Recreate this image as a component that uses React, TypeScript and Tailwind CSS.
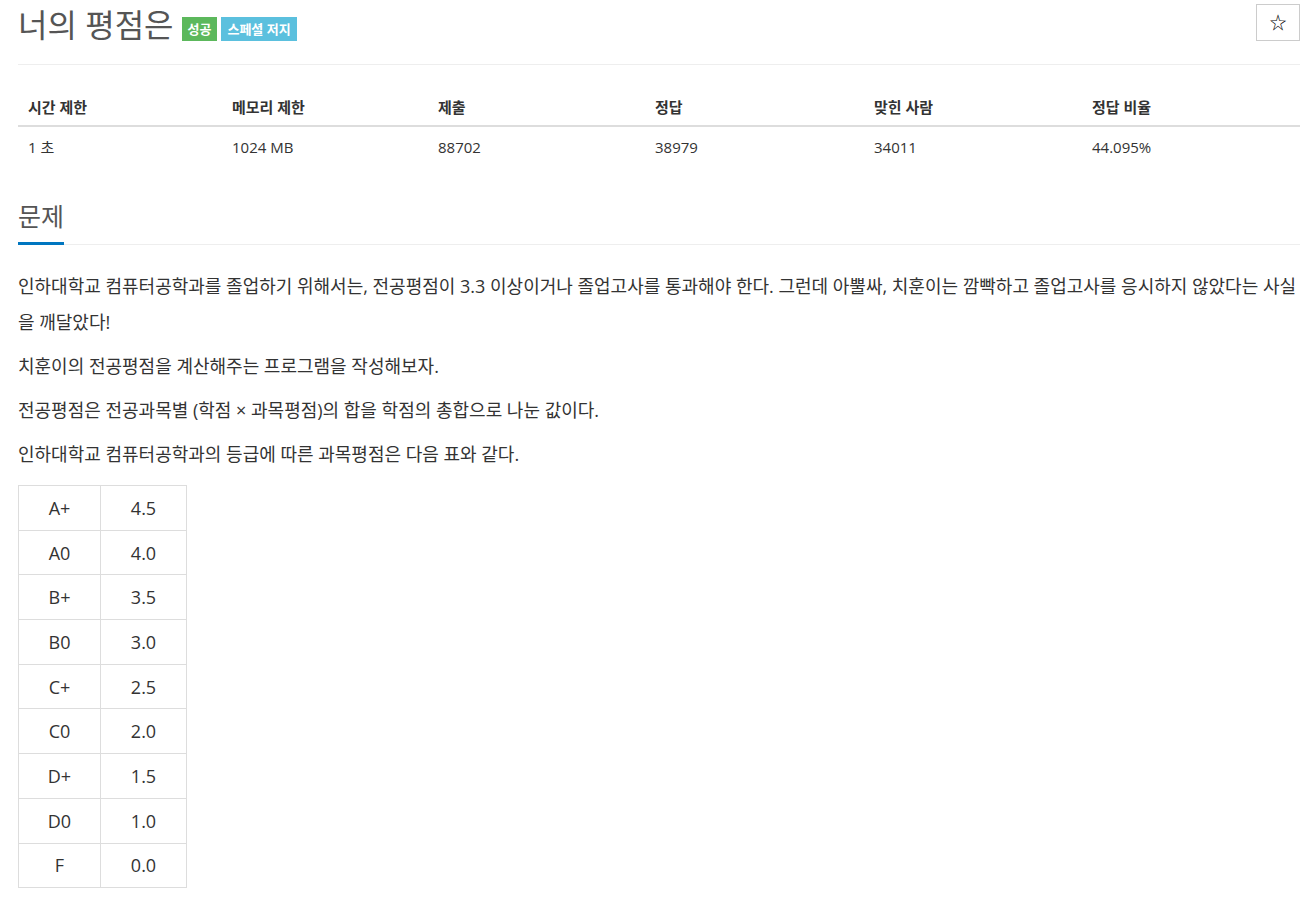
const stats = [
  { label: '시간 제한', value: '1 초', w: 'w-[204px]' },
  { label: '메모리 제한', value: '1024 MB', w: 'w-[206px]' },
  { label: '제출', value: '88702', w: 'w-[217px]' },
  { label: '정답', value: '38979', w: 'w-[219px]' },
  { label: '맞힌 사람', value: '34011', w: 'w-[218px]' },
  { label: '정답 비율', value: '44.095%', w: '' },
]

const grades = [
  ['A+', '4.5'],
  ['A0', '4.0'],
  ['B+', '3.5'],
  ['B0', '3.0'],
  ['C+', '2.5'],
  ['C0', '2.0'],
  ['D+', '1.5'],
  ['D0', '1.0'],
  ['F', '0.0'],
]

export default function App() {
  return (
    <div
      className="min-h-screen bg-white pl-[18px] pr-[11px] text-[#333]"
      style={{ fontFamily: '"Open Sans", "Noto Sans CJK KR", sans-serif' }}
    >
      {/* title */}
      <div className="flex items-start justify-between border-b border-[#eee] pb-[17px]">
        <div className="flex items-end pt-[3px]">
          <h1 className="text-[32px] leading-[44px] text-[#555]">너의 평점은</h1>
          <span className="mb-[6px] ml-[8px] bg-[#5cb85c] px-[6px] py-[3px] text-[13px] font-bold leading-[18px] text-white">
            성공
          </span>
          <span className="mb-[6px] ml-[4px] bg-[#5bc0de] px-[6px] py-[3px] text-[13px] font-bold leading-[18px] text-white">
            스페셜 저지
          </span>
        </div>
        <button className="mt-[4px] flex h-[37px] w-[44px] items-center justify-center border border-[#ccc] bg-white text-[17px] text-black">
          ☆
        </button>
      </div>

      {/* stats */}
      <table className="mt-[24px] w-full border-collapse text-[15px]">
        <thead>
          <tr className="border-b-2 border-[#ddd]">
            {stats.map((s) => (
              <th key={s.label} className={`${s.w} h-[37px] px-[10px] text-left font-bold`}>
                {s.label}
              </th>
            ))}
          </tr>
        </thead>
        <tbody>
          <tr>
            {stats.map((s) => (
              <td key={s.label} className="h-[42px] px-[10px] text-left">
                {s.value}
              </td>
            ))}
          </tr>
        </tbody>
      </table>

      {/* problem section */}
      <div className="mt-[30px] flex border-b border-[#eee]">
        <h2 className="-mb-px border-b-[3px] border-[#0076c0] pb-[8px] text-[25px] leading-[36px] text-[#555]">
          문제
        </h2>
      </div>

      <div className="mt-[23px] text-[18px] leading-[36px]">
        <p className="mb-[8px]">
          인하대학교 컴퓨터공학과를 졸업하기 위해서는, 전공평점이 3.3 이상이거나 졸업고사를 통과해야 한다. 그런데 아뿔싸, 치훈이는 깜빡하고 졸업고사를 응시하지 않았다는 사실을 깨달았다!
        </p>
        <p className="mb-[8px]">치훈이의 전공평점을 계산해주는 프로그램을 작성해보자.</p>
        <p className="mb-[8px]">전공평점은 전공과목별 (학점 × 과목평점)의 합을 학점의 총합으로 나눈 값이다.</p>
        <p className="mb-[13px]">인하대학교 컴퓨터공학과의 등급에 따른 과목평점은 다음 표와 같다.</p>

        <table className="border-collapse border border-[#ddd] text-[18px]">
          <tbody>
            {grades.map(([g, p]) => (
              <tr key={g}>
                <td className="h-[44.7px] w-[82px] border border-[#ddd] text-center leading-[28px]">{g}</td>
                <td className="h-[44.7px] w-[86px] border border-[#ddd] text-center leading-[28px]">{p}</td>
              </tr>
            ))}
          </tbody>
        </table>
      </div>
    </div>
  )
}
